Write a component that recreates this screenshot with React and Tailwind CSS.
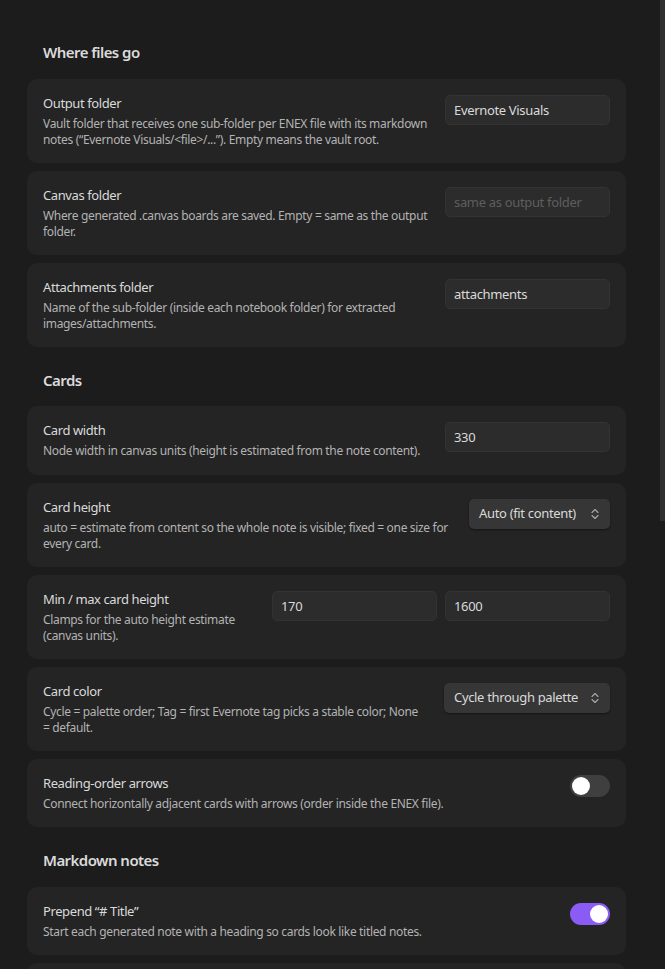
const FONT = "font-['Noto_Sans',sans-serif]";

function Chevrons() {
  return (
    <svg width="10" height="16" viewBox="0 0 10 16" fill="none" stroke="#a8a8a8" strokeWidth="1.1" strokeLinecap="round" strokeLinejoin="round">
      <path d="M2 6.5 L5 3.5 L8 6.5" />
      <path d="M2 9.5 L5 12.5 L8 9.5" />
    </svg>
  );
}

function TextField({ value, placeholder }) {
  return (
    <div className={`w-[165px] h-[30px] flex items-center pt-[2px] px-[8px] rounded-[5px] bg-[#2c2c2c] border border-[#333333] text-[13px] tracking-[-0.33px] ${value ? "text-[#dadada]" : "text-[#5e5e5e]"}`}>
      {value || placeholder}
    </div>
  );
}

function SelectBox({ value, width }) {
  return (
    <div className={`h-[30px] flex items-center justify-between px-[10px] rounded-[5px] bg-[#363636] shadow-[0_1px_2px_rgba(0,0,0,0.45)] text-[13px] tracking-[-0.33px] text-[#dadada] ${width}`}>
      <span>{value}</span>
      <Chevrons />
    </div>
  );
}

function Toggle({ on }) {
  return (
    <div className={`w-10 h-[22px] rounded-full flex items-center px-[2px] ${on ? "bg-[#8a5cf5] justify-end" : "bg-[#3f3f3f] justify-start"}`}>
      <div className="w-[18px] h-[18px] rounded-full bg-white" />
    </div>
  );
}

function Row({ title, desc, children, className = "h-[84px]", descWidth = "max-w-[386px]" }) {
  return (
    <div className={`flex justify-between gap-2 bg-[#242424] rounded-[10px] px-4 pt-4 ${className}`}>
      <div className={descWidth}>
        <div className="text-[13px] leading-[16px] tracking-[-0.4px] text-[#dadada]">{title}</div>
        <div className="text-[12px] leading-[16px] tracking-[-0.33px] text-[#b3b3b3] mt-[5px]">{desc}</div>
      </div>
      <div className="flex gap-2 shrink-0">{children}</div>
    </div>
  );
}

function Heading({ children, className }) {
  return <h3 className={`text-[15px] leading-[20px] font-semibold tracking-[-0.55px] text-[#dadada] px-4 ${className}`}>{children}</h3>;
}

export default function App() {
  return (
    <div className={`h-[969px] overflow-hidden bg-[#1c1c1c] relative ${FONT}`}>
      <div className="w-[599px] ml-[27px] pt-[42px] flex flex-col gap-2">
        <Heading className="mb-[9px]">Where files go</Heading>
        <Row title="Output folder" desc="Vault folder that receives one sub-folder per ENEX file with its markdown notes (“Evernote Visuals/<file>/...”). Empty means the vault root.">
          <TextField value="Evernote Visuals" />
        </Row>
        <Row title="Canvas folder" desc="Where generated .canvas boards are saved. Empty = same as the output folder.">
          <TextField placeholder="same as output folder" />
        </Row>
        <Row title="Attachments folder" desc="Name of the sub-folder (inside each notebook folder) for extracted images/attachments.">
          <TextField value="attachments" />
        </Row>

        <Heading className="mt-[15px] mb-[8px]">Cards</Heading>
        <Row title="Card width" desc="Node width in canvas units (height is estimated from the note content)." className="h-[69px]" descWidth="max-w-[385px]">
          <TextField value="330" />
        </Row>
        <Row title="Card height" desc="auto = estimate from content so the whole note is visible; fixed = one size for every card." descWidth="max-w-[414px]">
          <SelectBox value="Auto (fit content)" width="w-[141px]" />
        </Row>
        <Row title="Min / max card height" desc="Clamps for the auto height estimate (canvas units)." descWidth="max-w-[200px]">
          <TextField value="170" />
          <TextField value="1600" />
        </Row>
        <Row title="Card color" desc="Cycle = palette order; Tag = first Evernote tag picks a stable color; None = default." descWidth="max-w-[382px]">
          <SelectBox value="Cycle through palette" width="w-[166px]" />
        </Row>
        <Row title="Reading-order arrows" desc="Connect horizontally adjacent cards with arrows (order inside the ENEX file)." className="h-[68px]" descWidth="max-w-[440px]">
          <Toggle />
        </Row>

        <Heading className="mt-[15px] mb-[9px]">Markdown notes</Heading>
        <Row title="Prepend “# Title”" desc="Start each generated note with a heading so cards look like titled notes." className="h-[68px]" descWidth="max-w-[440px]">
          <Toggle on />
        </Row>
        <div className="h-[84px] bg-[#242424] rounded-[10px]" />
      </div>
      <div className="absolute top-0 right-0 w-[5px] h-[521px] bg-[#303030]" />
    </div>
  );
}
